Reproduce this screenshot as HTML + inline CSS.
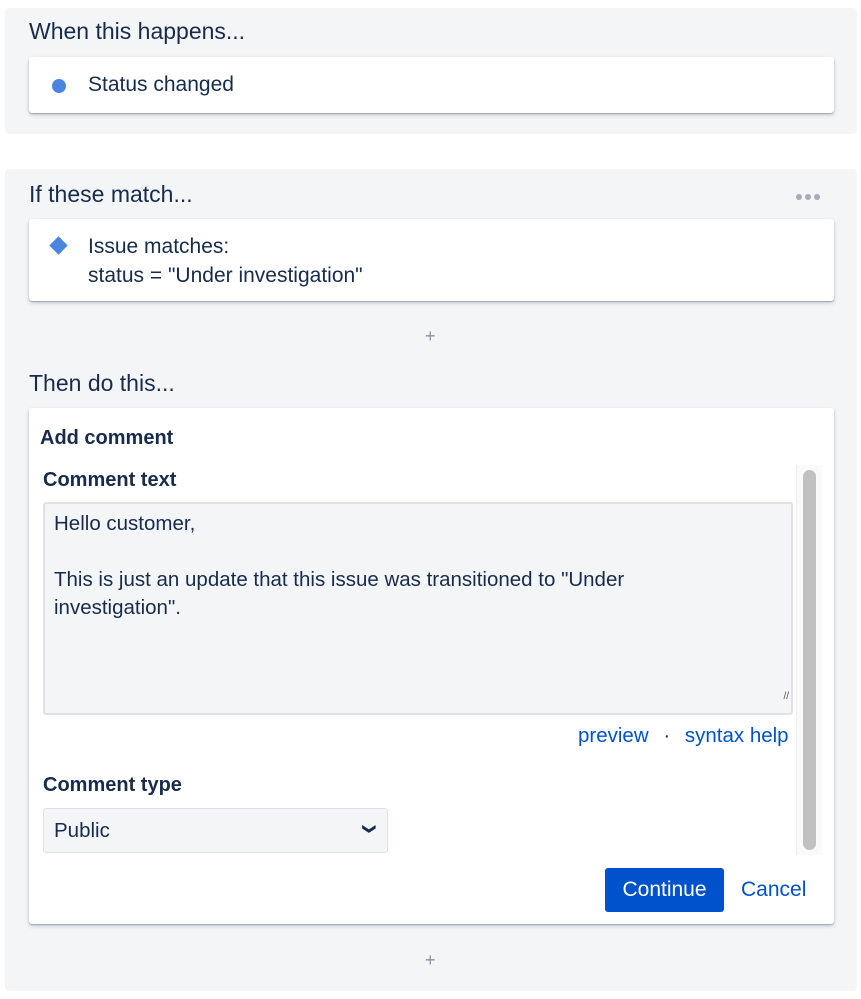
<!DOCTYPE html>
<html><head><style>
*{box-sizing:border-box;margin:0;padding:0}
body{width:861px;height:999px;background:#fff;font-family:"Liberation Sans",sans-serif;color:#172b4d;position:relative;overflow:hidden}
.abs{position:absolute}
.panel{position:absolute;left:5px;width:852px;background:#f4f5f7;border-radius:4px}
.card{position:absolute;left:29px;width:805px;background:#fff;border-radius:3px;box-shadow:0 1px 1px rgba(9,30,66,.25),0 2px 4px rgba(9,30,66,.2)}
.h{position:absolute;left:29px;font-size:23px;color:#172b4d}
.t{font-size:21px}
.plus{position:absolute;left:425px;color:#8993a4;font-size:18px}
a{color:#0052cc;text-decoration:none}
</style></head><body>
<div class="panel" style="top:8px;height:126px"></div>
<div class="h" style="top:18px">When this happens...</div>
<div class="card" style="top:57px;height:56px">
 <div class="abs" style="left:23px;top:22px;width:14px;height:14px;border-radius:50%;background:#4a86e0"></div>
 <div class="abs t" style="left:59px;top:16px">Status changed</div>
</div>
<div class="panel" style="top:169px;height:822px"></div>
<div class="h" style="top:181px">If these match...</div>
<div class="abs" style="left:796px;top:194px;display:flex;gap:3px"><i style="width:6px;height:6px;border-radius:50%;background:#a5adba"></i><i style="width:6px;height:6px;border-radius:50%;background:#a5adba"></i><i style="width:6px;height:6px;border-radius:50%;background:#a5adba"></i></div>
<div class="card" style="top:219px;height:82px">
 <div class="abs" style="left:23px;top:20px;width:13px;height:13px;background:#4a86e0;transform:rotate(45deg)"></div>
 <div class="abs t" style="left:59px;top:13px;line-height:29px">Issue matches:<br>status = "Under investigation"</div>
</div>
<div class="plus" style="top:326px">+</div>
<div class="h" style="top:370px">Then do this...</div>
<div class="card" style="top:408px;height:516px">
 <div class="abs" style="left:11px;top:19px;font-size:20px;font-weight:bold">Add comment</div>
 <div class="abs" style="left:14px;top:61px;font-size:20px;font-weight:bold">Comment text</div>
 <div class="abs" style="left:14px;top:94px;width:750px;height:213px;background:#f4f5f7;border:2px solid #dfe1e6;border-radius:3px;padding:6px 9px;font-size:20.5px;line-height:28px"><div style="width:620px">Hello customer,<br><br>This is just an update that this issue was transitioned to "Under investigation".</div>
  <div class="abs" style="right:2px;bottom:2px;font-size:10px;color:#555">//</div></div>
 <div class="abs" style="left:549px;top:316px;font-size:20.5px"><a>preview</a> <span style="margin:0 9px">·</span> <a>syntax help</a></div>
 <div class="abs" style="left:14px;top:366px;font-size:20px;font-weight:bold">Comment type</div>
 <div class="abs" style="left:14px;top:400px;width:345px;height:45px;background:#f4f5f7;border:1px solid #dfe1e6;border-radius:3px;font-size:20.5px;padding:10px 10px">Public<span class="abs" style="right:12px;top:12px;font-size:13px;font-weight:bold;transform:rotate(90deg)">&#10095;</span></div>
 <div class="abs" style="left:767px;top:57px;width:26px;height:390px;background:#fafafa;border-left:1px solid #eee"><div class="abs" style="left:6px;top:5px;width:13px;height:380px;border-radius:7px;background:#c1c1c1"></div></div>
 <div class="abs" style="left:576px;top:460px;width:119px;height:44px;background:#0052cc;border-radius:3px;color:#fff;font-size:21px;text-align:center;line-height:44px">Continue</div>
 <div class="abs" style="left:712px;top:470px;font-size:21px"><a>Cancel</a></div>
</div>
<div class="plus" style="top:950px">+</div>
</body></html>
